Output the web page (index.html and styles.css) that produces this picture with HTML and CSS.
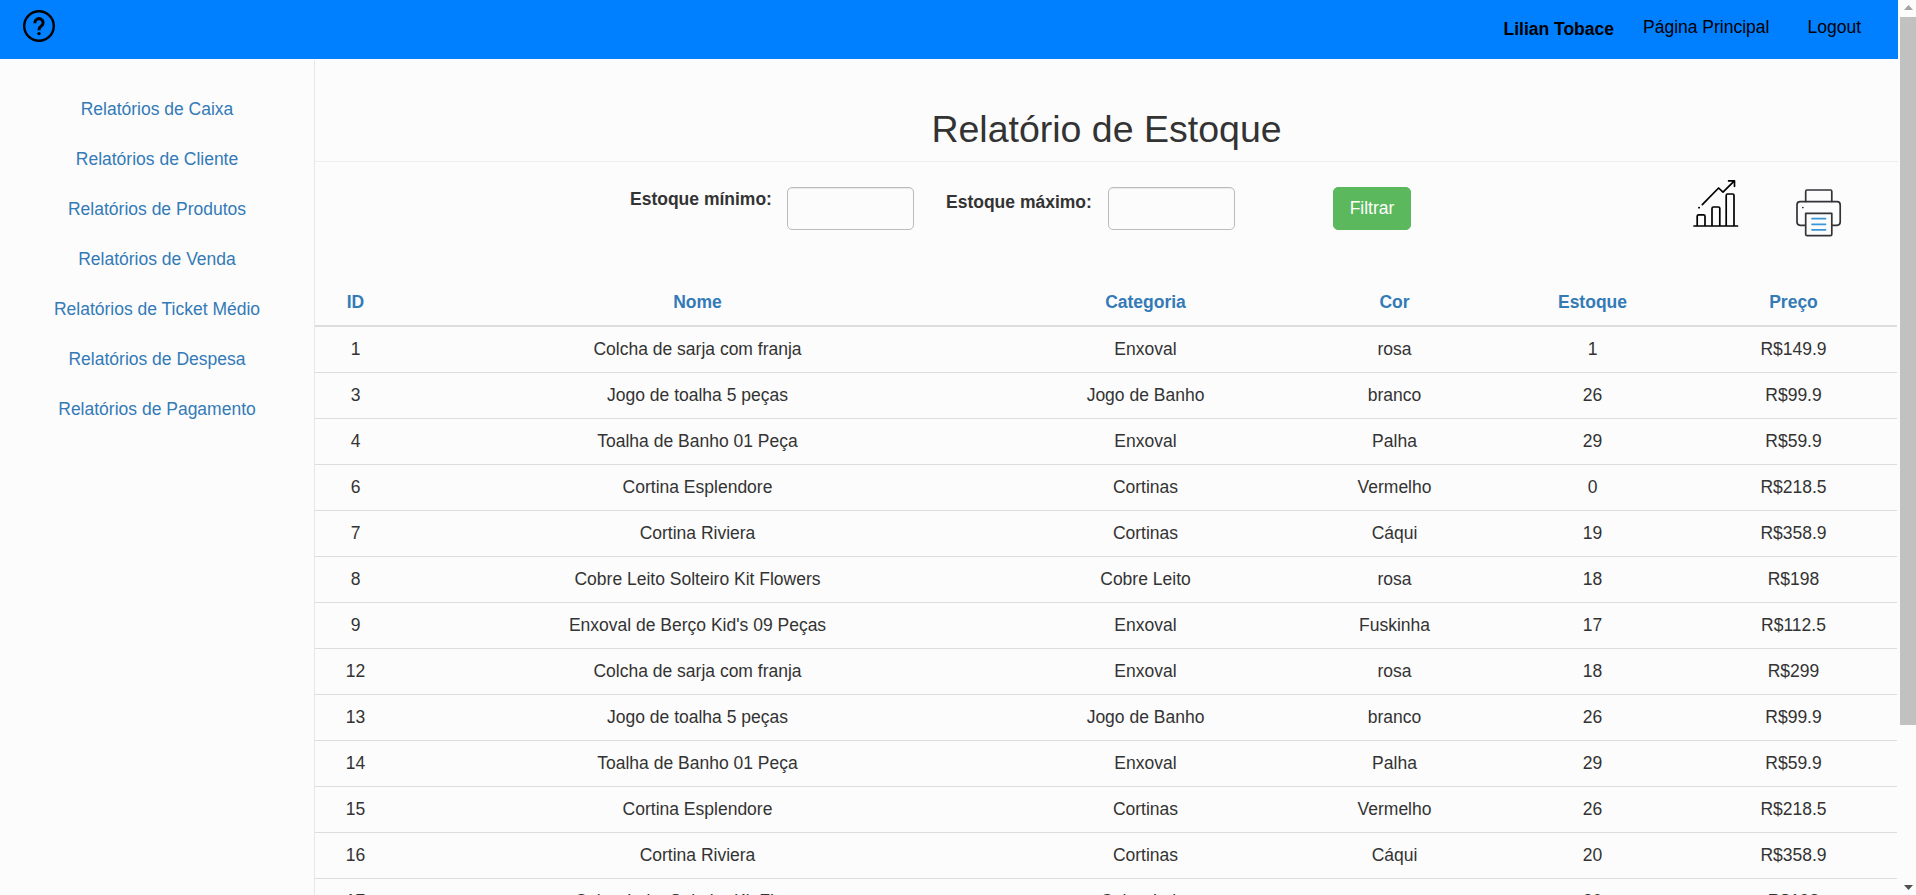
FILE: index.html
```html
<!DOCTYPE html>
<html lang="pt-BR">
<head>
<meta charset="utf-8">
<title>Relatório de Estoque</title>
<link rel="stylesheet" href="styles.css">
</head>
<body>
<div class="page">
  <header class="topbar">
    <a class="help" href="#" aria-label="Ajuda">
      <svg width="32" height="32" viewBox="0 0 32 32" fill="none" stroke="#000">
        <circle cx="16" cy="16" r="14.8" stroke-width="2.4"/>
        <path d="M11.9 13.2V12.6a4.1 4 0 1 1 6.5 3.3c-1.6 1.2-2.3 1.8-2.3 3.2v1.2" stroke-width="3"/>
        <circle cx="16" cy="23.6" r="1.7" fill="#000" stroke="none"/>
      </svg>
    </a>
    <nav class="topnav">
      <strong class="user">Lilian Tobace</strong>
      <a class="home" href="#">Página Principal</a>
      <a href="#">Logout</a>
    </nav>
  </header>
  <div class="body">
    <aside class="sidebar">
      <a href="#">Relatórios de Caixa</a>
      <a href="#">Relatórios de Cliente</a>
      <a href="#">Relatórios de Produtos</a>
      <a href="#">Relatórios de Venda</a>
      <a href="#">Relatórios de Ticket Médio</a>
      <a href="#">Relatórios de Despesa</a>
      <a href="#">Relatórios de Pagamento</a>
    </aside>
    <main class="content">
      <h1 class="title">Relatório de Estoque</h1>
      <form class="filters">
        <label class="label-min" for="min">Estoque mínimo:</label>
        <input class="field" id="min" type="text">
        <label class="label-max" for="max">Estoque máximo:</label>
        <input class="field" id="max" type="text">
        <button class="submit" type="button">Filtrar</button>
        <a class="chart" href="#" aria-label="Gráfico">
          <svg width="46" height="48" viewBox="0 0 46 48" fill="none" stroke="#000" stroke-width="1.7" stroke-linecap="round" stroke-linejoin="round">
            <path d="M1 46H44.5M4.2 46V36.200q0-1.400 1.400-1.400h5q1.400 0 1.400 1.400V46M19 46V28.400q0-1.400 1.400-1.400h5q1.400 0 1.400 1.400V46M33.200 46V15.400q0-1.400 1.400-1.400h5q1.400 0 1.400 1.400V46"/>
            <path d="M9.300 24.600 25.600 8l4.400 4.100L40.600 1.600M35.600.9h5.900v5.400M5.900 27.700h.3"/>
          </svg>
        </a>
        <a class="print" href="#" aria-label="Imprimir">
          <svg width="46" height="48" viewBox="0 0 46 48" fill="none" stroke="#333338" stroke-width="1.7" stroke-linejoin="round" stroke-linecap="round">
            <path d="M9.700 12.400V2.400q0-1.400 1.400-1.400H34.400q1.400 0 1.400 1.400v10"/>
            <path d="M9 36.300H4.200q-3.200 0-3.200-3.200V15.900q0-3.200 3.200-3.200H41q3.200 0 3.200 3.200v17.200q0 3.200-3.200 3.200H36.600"/>
            <path d="M9.700 24.400H35.800V45.200q0 1.400-1.400 1.400H11.100q-1.400 0-1.400-1.400Z"/>
            <path d="M6.800 18.500h.1"/>
            <path d="M16 29.700H29.500M16 35.300H29.500M16 40.800H29.500" stroke="#3a95d6"/>
          </svg>
        </a>
      </form>
      <table class="stock">
        <colgroup><col class="c-id"><col class="c-nome"><col class="c-cat"><col class="c-cor"><col class="c-est"><col class="c-preco"></colgroup>
        <thead>
          <tr><th>ID</th><th>Nome</th><th>Categoria</th><th>Cor</th><th>Estoque</th><th>Preço</th></tr>
        </thead>
        <tbody>
          <tr><td>1</td><td>Colcha de sarja com franja</td><td>Enxoval</td><td>rosa</td><td>1</td><td>R$149.9</td></tr>
          <tr><td>3</td><td>Jogo de toalha 5 peças</td><td>Jogo de Banho</td><td>branco</td><td>26</td><td>R$99.9</td></tr>
          <tr><td>4</td><td>Toalha de Banho 01 Peça</td><td>Enxoval</td><td>Palha</td><td>29</td><td>R$59.9</td></tr>
          <tr><td>6</td><td>Cortina Esplendore</td><td>Cortinas</td><td>Vermelho</td><td>0</td><td>R$218.5</td></tr>
          <tr><td>7</td><td>Cortina Riviera</td><td>Cortinas</td><td>Cáqui</td><td>19</td><td>R$358.9</td></tr>
          <tr><td>8</td><td>Cobre Leito Solteiro Kit Flowers</td><td>Cobre Leito</td><td>rosa</td><td>18</td><td>R$198</td></tr>
          <tr><td>9</td><td>Enxoval de Berço Kid's 09 Peças</td><td>Enxoval</td><td>Fuskinha</td><td>17</td><td>R$112.5</td></tr>
          <tr><td>12</td><td>Colcha de sarja com franja</td><td>Enxoval</td><td>rosa</td><td>18</td><td>R$299</td></tr>
          <tr><td>13</td><td>Jogo de toalha 5 peças</td><td>Jogo de Banho</td><td>branco</td><td>26</td><td>R$99.9</td></tr>
          <tr><td>14</td><td>Toalha de Banho 01 Peça</td><td>Enxoval</td><td>Palha</td><td>29</td><td>R$59.9</td></tr>
          <tr><td>15</td><td>Cortina Esplendore</td><td>Cortinas</td><td>Vermelho</td><td>26</td><td>R$218.5</td></tr>
          <tr><td>16</td><td>Cortina Riviera</td><td>Cortinas</td><td>Cáqui</td><td>20</td><td>R$358.9</td></tr>
          <tr><td>17</td><td>Cobre Leito Solteiro Kit Flowers</td><td>Cobre Leito</td><td>rosa</td><td>20</td><td>R$198</td></tr>
        </tbody>
      </table>
    </main>
  </div>
</div>
<div class="scrollbar">
  <svg width="9" height="5" viewBox="0 0 9 5"><path d="M0 5 4.500 0 9 5Z" fill="#a3a3a3"/></svg>
  <div class="thumb"></div>
  <svg class="down" width="9" height="5" viewBox="0 0 9 5"><path d="M0 0H9L4.500 5Z" fill="#505050"/></svg>
</div>
</body>
</html>
```
FILE: styles.css
```css
* { box-sizing: border-box; }

body {
  margin: 0;
  display: flex;
  height: 895px;
  overflow: hidden;
  background: #fcfcfc;
  color: #333;
  font: 17.5px/26px "Liberation Sans", Arial, sans-serif;
}

a { color: #337ab7; text-decoration: none; }
svg { display: block; }

.page {
  width: 1898px;
  height: 895px;
  display: flex;
  flex-direction: column;
}

.topbar {
  flex: none;
  height: 59px;
  display: flex;
  justify-content: space-between;
  align-items: flex-start;
  padding: 10px 37px 0 23px;
  background: #007fff;
}

.topnav { display: flex; align-items: flex-start; padding-top: 4px; }
.topnav a, .user { color: #000; }
.user { padding-top: 2px; margin-right: 29px; }
.home { margin-right: 38px; }

.body { display: flex; flex: 1; min-height: 0; padding-top: 1px; }

.sidebar {
  flex: none;
  width: 315px;
  padding-top: 24px;
  border-right: 1px solid #e7e7e7;
  display: flex;
  flex-direction: column;
  text-align: center;
  line-height: 50px;
}

.content { flex: none; width: 1583px; overflow: hidden; }

.title {
  margin: 0;
  height: 102px;
  padding-top: 48px;
  border-bottom: 1px solid #eee;
  font-size: 37.5px;
  font-weight: 500;
  line-height: 42px;
  text-align: center;
}

.filters {
  display: flex;
  align-items: flex-start;
  height: 114px;
  padding: 25px 0 0 315px;
}

.filters label { font-weight: bold; line-height: 25px; white-space: nowrap; }
.label-min { width: 157px; }
.label-max { width: 162px; margin-left: 32px; padding-top: 3px; }

.field {
  width: 127px;
  height: 43px;
  border: 1px solid #bbb;
  border-radius: 5px;
  background: #fcfcfc;
  box-shadow: inset 0 1px 1px rgba(0, 0, 0, .075);
}

.submit {
  width: 78px;
  height: 43px;
  margin-left: 98px;
  padding: 0 0 2px;
  border: 1px solid #5cb85c;
  border-radius: 5px;
  background: #5cb85c;
  color: #fff;
  font: inherit;
}

.chart { margin: -7px 0 0 282px; }
.print { margin: 2px 0 0 57px; }

.stock {
  width: 1582px;
  table-layout: fixed;
  border-collapse: separate;
  border-spacing: 0;
  text-align: center;
}

.c-id { width: 80px; }
.c-nome { width: 604px; }
.c-cat { width: 292px; }
.c-cor { width: 206px; }
.c-est { width: 190px; }
.c-preco { width: 210px; }

.stock th {
  height: 51px;
  padding: 2px 0 0 1px;
  color: #337ab7;
  border-bottom: 2px solid #ddd;
}

.stock td {
  height: 46px;
  padding: 0 0 2px 1px;
  border-bottom: 1px solid #ddd;
}

.stock th:last-child, .stock td:last-child { padding-left: 3px; }

.scrollbar {
  width: 18px;
  padding: 5px 0 5px 2px;
  display: flex;
  flex-direction: column;
  align-items: center;
}

.thumb { width: 16px; height: 708px; margin-top: 7px; background: #c1c1c1; }
.down { margin-top: auto; }
```
